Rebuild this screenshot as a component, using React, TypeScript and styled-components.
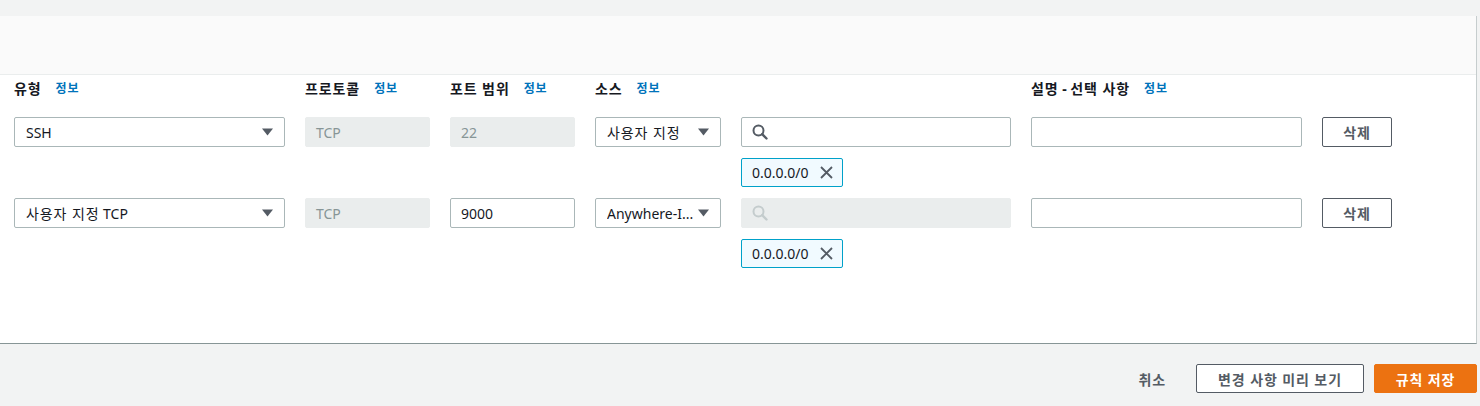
import styled, { createGlobalStyle } from 'styled-components';
import { Fragment } from 'react';

const GlobalStyle = createGlobalStyle`
  html, body {
    margin: 0;
    padding: 0;
    background: #f2f3f3;
    font-family: "Noto Sans", "Noto Sans CJK KR", sans-serif;
    font-size: 14px;
    color: #16191f;
  }
  #root {
    height: 406px;
  }
`;

type Rule = {
  type: string;
  protocol: string;
  port: string;
  portEditable: boolean;
  source: string;
  searchDisabled: boolean;
  cidr: string;
};

const rules: Rule[] = [
  { type: 'SSH', protocol: 'TCP', port: '22', portEditable: false, source: '사용자 지정', searchDisabled: false, cidr: '0.0.0.0/0' },
  { type: '사용자 지정 TCP', protocol: 'TCP', port: '9000', portEditable: true, source: 'Anywhere-I...', searchDisabled: true, cidr: '0.0.0.0/0' },
];

const labels: { text: string; column: number }[] = [
  { text: '유형', column: 1 },
  { text: '프로토콜', column: 2 },
  { text: '포트 범위', column: 3 },
  { text: '소스', column: 4 },
  { text: '설명 - 선택 사항', column: 6 },
];

// hangul runs get a touch of tracking so they take the width they have in the shot
const Txt = ({ children }: { children: string }) => (
  <>
    {children.split(/([가-힣]+(?:\s+[가-힣]+)*)/).map((part, i) =>
      /[가-힣]/.test(part) ? <Ko key={i}>{part}</Ko> : <Fragment key={i}>{part}</Fragment>
    )}
  </>
);

const Caret = () => (
  <svg width="11" height="8" viewBox="0 0 11 8">
    <path d="M0 0.5 H11 L5.5 7.5 Z" fill="#545b64" />
  </svg>
);

const SearchIcon = ({ disabled }: { disabled: boolean }) => (
  <svg width="16" height="16" viewBox="0 0 16 16" fill="none">
    <circle cx="6.5" cy="6.5" r="5" stroke={disabled ? '#c4cccd' : '#545b64'} strokeWidth="2" />
    <path d="M10.2 10.2 L14.5 14.5" stroke={disabled ? '#c4cccd' : '#545b64'} strokeWidth="2.4" strokeLinecap="round" />
  </svg>
);

const CloseIcon = () => (
  <svg width="13" height="13" viewBox="0 0 13 13">
    <path d="M1 1 L12 12 M12 1 L1 12" stroke="#545b64" strokeWidth="1.8" />
  </svg>
);

const App = () => {
  return (
    <>
      <GlobalStyle />
      <Page>
        <TopStrip />
        <Panel>
          <PanelHeader />
          <PanelBody>
            <LabelRow>
              {labels.map((label) => (
                <Label key={label.text} column={label.column}>
                  <span><Txt>{label.text}</Txt></span>
                  <InfoLink><Txt>정보</Txt></InfoLink>
                </Label>
              ))}
            </LabelRow>
            <Rules>
              {rules.map((rule, i) => (
                <RuleRow key={i}>
                  <Select>
                    <SelectText><Txt>{rule.type}</Txt></SelectText>
                    <Caret />
                  </Select>
                  <Field disabled>{rule.protocol}</Field>
                  <Field disabled={!rule.portEditable}>{rule.port}</Field>
                  <Select>
                    <SelectText><Txt>{rule.source}</Txt></SelectText>
                    <Caret />
                  </Select>
                  <SourceColumn>
                    <SearchBox disabled={rule.searchDisabled}>
                      <SearchIcon disabled={rule.searchDisabled} />
                    </SearchBox>
                    <Token>
                      {rule.cidr}
                      <CloseIcon />
                    </Token>
                  </SourceColumn>
                  <Field disabled={false} />
                  <DeleteButton><Txt>삭제</Txt></DeleteButton>
                </RuleRow>
              ))}
            </Rules>
          </PanelBody>
        </Panel>
        <Footer>
          <CancelButton><Txt>취소</Txt></CancelButton>
          <SecondaryButton><Txt>변경 사항 미리 보기</Txt></SecondaryButton>
          <PrimaryButton><Txt>규칙 저장</Txt></PrimaryButton>
        </Footer>
      </Page>
    </>
  );
};

const columns = '271px 125px 125px 126px 270px 271px 70px';

const Ko = styled.span`
  letter-spacing: 0.9px;
`;

const Page = styled.div`
  display: flex;
  flex-direction: column;
  height: 406px;
`;

const TopStrip = styled.div`
  height: 16px;
  background: #f2f3f3;
`;

const Panel = styled.div`
  margin-right: 3px;
  background: #ffffff;
  border-right: 1px solid #c6cdce;
  border-bottom: 1px solid #879596;
  display: flex;
  flex-direction: column;
`;

const PanelHeader = styled.div`
  height: 58px;
  background: #fafafa;
  border-bottom: 1px solid #eaeded;
`;

const PanelBody = styled.div`
  height: 268px;
  padding: 4px 0 0 14px;
  box-sizing: border-box;
`;

const LabelRow = styled.div`
  display: grid;
  grid-template-columns: ${columns};
  column-gap: 20px;
  height: 20px;
  margin-bottom: 18px;
`;

const Label = styled.div<{ column: number }>`
  grid-column: ${(p) => p.column};
  display: flex;
  align-items: center;
  gap: 14px;
  font-weight: 700;
  font-size: 14px;
  line-height: 20px;
  white-space: nowrap;
`;

const InfoLink = styled.span`
  color: #0073bb;
  font-size: 12px;
  font-weight: 700;
`;

const Rules = styled.div`
  display: flex;
  flex-direction: column;
  gap: 11px;
`;

const RuleRow = styled.div`
  display: grid;
  grid-template-columns: ${columns};
  column-gap: 20px;
  align-items: start;
`;

const Select = styled.div`
  height: 30px;
  box-sizing: border-box;
  border: 1px solid #aab7b8;
  border-radius: 2px;
  background: #ffffff;
  display: flex;
  align-items: center;
  padding: 0 11px 0 11px;
  gap: 4px;
`;

const SelectText = styled.span`
  flex: 1;
  overflow: hidden;
  white-space: nowrap;
  text-overflow: ellipsis;
`;

const Field = styled.div<{ disabled: boolean }>`
  height: 30px;
  box-sizing: border-box;
  border: 1px solid ${(p) => (p.disabled ? '#eaeded' : '#aab7b8')};
  border-radius: 2px;
  background: ${(p) => (p.disabled ? '#eaeded' : '#ffffff')};
  color: ${(p) => (p.disabled ? '#879596' : '#16191f')};
  display: flex;
  align-items: center;
  padding: 0 10px;
`;

const SourceColumn = styled.div`
  display: flex;
  flex-direction: column;
  align-items: flex-start;
  gap: 11px;
`;

const SearchBox = styled.div<{ disabled: boolean }>`
  width: 100%;
  height: 30px;
  box-sizing: border-box;
  border: 1px solid ${(p) => (p.disabled ? '#eaeded' : '#aab7b8')};
  border-radius: 2px;
  background: ${(p) => (p.disabled ? '#eaeded' : '#ffffff')};
  display: flex;
  align-items: center;
  padding: 0 10px;
`;

const Token = styled.div`
  height: 29px;
  box-sizing: border-box;
  border: 1px solid #00a1c9;
  border-radius: 2px;
  background: #f1faff;
  display: flex;
  align-items: center;
  gap: 11px;
  padding: 0 9px 0 10px;
`;

const DeleteButton = styled.button`
  height: 30px;
  box-sizing: border-box;
  border: 1px solid #545b64;
  border-radius: 2px;
  background: #ffffff;
  color: #545b64;
  font-family: inherit;
  font-size: 14px;
  font-weight: 700;
  padding: 0;
`;

const Footer = styled.div`
  display: flex;
  justify-content: flex-end;
  align-items: center;
  gap: 10px;
  padding: 20px 3px 0 0;
`;

const CancelButton = styled.button`
  height: 29px;
  border: none;
  background: transparent;
  color: #545b64;
  font-family: inherit;
  font-size: 14px;
  font-weight: 700;
  padding: 0 20px;
`;

const SecondaryButton = styled.button`
  height: 29px;
  width: 168px;
  box-sizing: border-box;
  border: 1px solid #545b64;
  border-radius: 2px;
  background: #ffffff;
  color: #545b64;
  font-family: inherit;
  font-size: 14px;
  font-weight: 700;
  padding: 0;
`;

const PrimaryButton = styled.button`
  height: 29px;
  width: 103px;
  box-sizing: border-box;
  border: 1px solid #ec7211;
  border-radius: 2px;
  background: #ec7211;
  color: #ffffff;
  font-family: inherit;
  font-size: 14px;
  font-weight: 700;
  padding: 0;
`;

export default App;
